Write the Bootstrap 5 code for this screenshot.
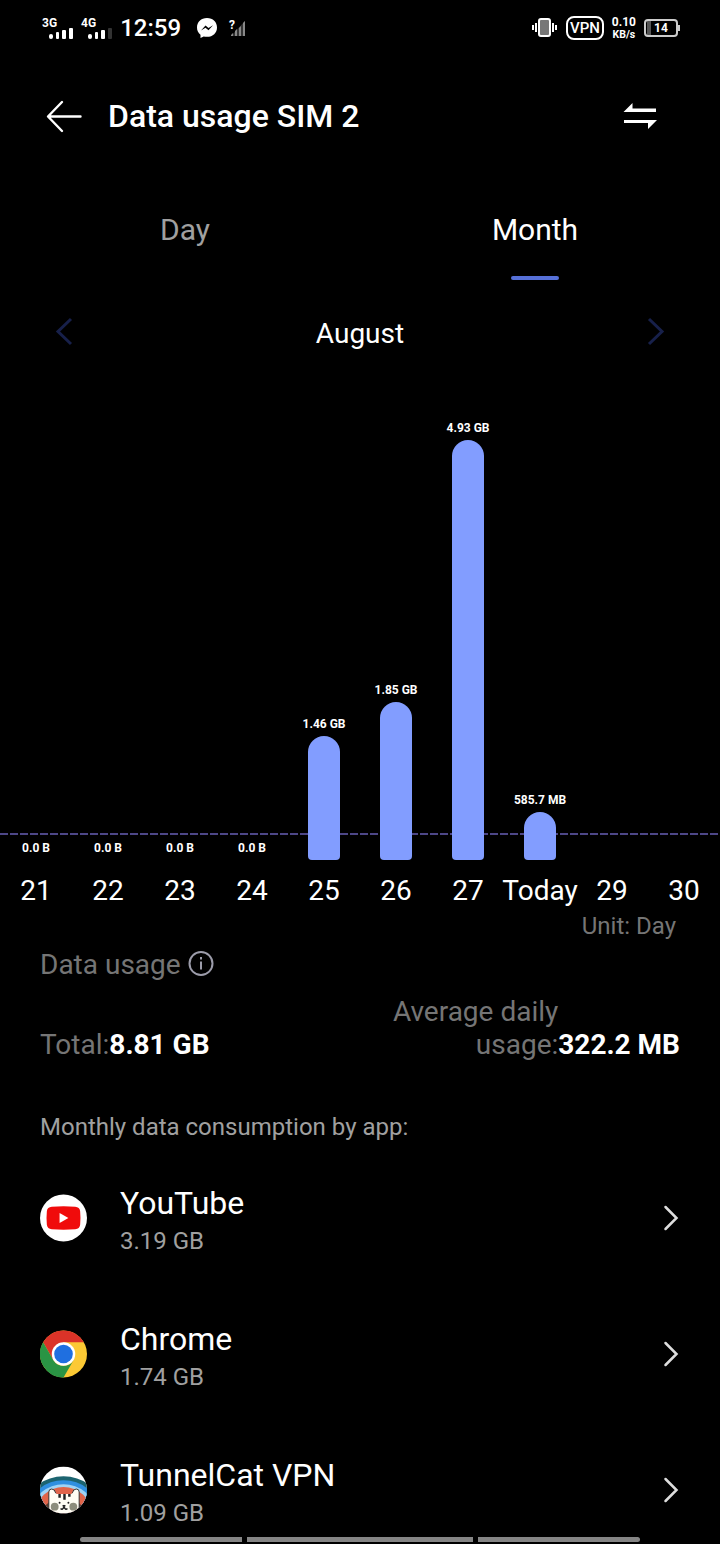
<!DOCTYPE html>
<html lang="en" data-bs-theme="dark">
<head>
    <meta charset="UTF-8">
    <meta name="viewport" content="width=device-width, initial-scale=1.0">
    <title>Data usage SIM 2</title>
    <link href="https://cdn.jsdelivr.net/npm/bootstrap@5.3.3/dist/css/bootstrap.min.css" rel="stylesheet">
    <style>
        body {
            background-color: #000;
            color: #fff;
            font-family: Roboto, "Noto Sans", sans-serif;
            font-size: 28px;
            line-height: 32px;
        }
        svg {
            display: block;
            flex-shrink: 0;
        }
        .gutter { padding-left: 40px; padding-right: 40px; }
        .text-dim { color: #757575; }
        .text-soft { color: #a0a0a0; }
        .fs-note { font-size: 24px; }
        .plain-btn {
            background: none;
            border: 0;
            padding: 0;
            color: inherit;
        }

        /* status bar */
        .status-bar { height: 56px; }
        .status-left { padding-left: 2px; }
        .clock { font-size: 24px; font-weight: 500; }
        .tiny { font-size: 12px; line-height: 12px; font-weight: 700; }
        .signal-bars { margin: 10px 0 0 -8px; }
        .vpn-tag {
            border: 2px solid #fff;
            border-radius: 8px;
            padding: 1px 2px;
            font-size: 15px;
            line-height: 18px;
            font-weight: 500;
        }
        .battery-box {
            width: 34px;
            padding: 1px 0;
            border: 2px solid #ccc;
            border-radius: 4px;
            background: linear-gradient(90deg, #000 1px, #555 1px, #555 5px, #000 5px);
        }
        .battery-box + span {
            width: 2px;
            height: 6px;
            background-color: #ccc;
        }

        /* header and tabs */
        .page-head { height: 120px; }
        .page-head h1 { font-size: 32px; font-weight: 500; line-height: 40px; }
        .tab-row { padding: 0 10px; height: 104px; }
        .tab-btn {
            font-size: 30px;
            color: #a0a0a0;
            padding-top: 38px;
        }
        .tab-btn::after {
            content: "";
            display: block;
            width: 48px;
            height: 4px;
            margin: 30px auto 0;
            border-radius: 2px;
        }
        .tab-btn.active { color: #fff; }
        .tab-btn.active::after { background-color: #5670d8; }
        .month-row { height: 104px; padding: 0 52px; color: #17204a; }

        /* chart */
        .chart { height: 476px; }
        .chart-col { flex: 1 1 0; min-width: 0; white-space: nowrap; }
        .chart-value { font-size: 12px; line-height: 16px; font-weight: 700; margin-bottom: 4px; }
        .chart-bar {
            width: 32px;
            background-color: #829dff;
            border-radius: 16px 16px 4px 4px;
        }
        .avg-line {
            bottom: 25px;
            height: 2px;
            background: repeating-linear-gradient(90deg, #4d4788 0 8px, transparent 8px 10px);
        }
        .axis { height: 50px; padding-top: 15px; }

        /* totals */
        .usage-head { gap: 7px; margin-top: 7px; }
        .totals { margin-top: 14px; line-height: 33px; }

        /* app list */
        .app-list { gap: 54px; margin-top: 35px; }
        .app-link { height: 82px; gap: 33px; color: #fff; }
        .app-text { padding-top: 6px; line-height: 36px; }
        .app-text .name { font-size: 32px; line-height: 40px; }

        .gesture-bar { gap: 5px; padding: 0 80px 2px; }
        .gesture-bar span { height: 5px; background-color: #858585; flex: 162; }
        .gesture-bar span:nth-child(2) { flex: 226; }
        .gesture-bar span:first-child { border-radius: 3px 0 0 3px; }
        .gesture-bar span:last-child { border-radius: 0 3px 3px 0; }
    </style>
</head>
<body>
    <div class="status-bar gutter d-flex align-items-center justify-content-between">
        <div class="status-left d-flex align-items-center">
            <div class="d-flex me-2">
                <span class="tiny">3G</span>
                <svg class="signal-bars" width="24" height="12" viewBox="0 0 24 12" fill="#fff">
                    <rect x="0" y="7" width="4" height="5" rx="2"/><rect x="7" y="5" width="3" height="7" rx="1"/><rect x="13" y="3" width="4" height="9" rx="1"/><rect x="20" y="1" width="4" height="11" rx="1"/>
                </svg>
            </div>
            <div class="d-flex me-2">
                <span class="tiny">4G</span>
                <svg class="signal-bars" width="24" height="12" viewBox="0 0 24 12" fill="#fff">
                    <rect x="0" y="7" width="4" height="5" rx="2"/><rect x="7" y="5" width="3" height="7" rx="1"/><rect x="13" y="3" width="4" height="9" rx="1"/><rect x="20" y="1" width="4" height="11" rx="1" fill="#333"/>
                </svg>
            </div>
            <span class="clock">12:59</span>
            <svg class="ms-3" width="20" height="20" viewBox="0 0 20 20">
                <path d="M10 0C4 0 0 4 0 9.500c0 3 1.200 5.500 3.500 7.200V20l3.200-1.600c1 .3 2.100.4 3.300.4 6 0 10-4 10-9.400S16 0 10 0z" fill="#fff"/>
                <path d="M4 12.500l4.500-5 3 2.500L16 7.200l-4.500 5-3-2.500z" fill="#000"/>
            </svg>
            <div class="d-flex ms-2 ps-1">
                <span class="tiny">?</span>
                <svg width="10" height="18" viewBox="0 0 10 18" fill="#888" overflow="visible">
                    <path d="M-4 17L10 2v15z" fill="#333"/><path d="M-4 17v-1l2-2v3zM0 17v-5l2-2v7zM4 17V9l2-2v10zM8 17V4l2-2v15z"/>
                </svg>
            </div>
        </div>
        <div class="d-flex align-items-center gap-2">
            <svg width="26" height="20" viewBox="0 0 26 20" fill="none" stroke="#fff" stroke-width="2">
                <rect x="7" y="1" width="11" height="17" rx="2" fill="#777"/>
                <path d="M4 5v9M1 7v5M21 5v9M24 7v5"/>
            </svg>
            <span class="vpn-tag">VPN</span>
            <div class="tiny text-center">0.10<br><small>KB/s</small></div>
            <div class="d-flex align-items-center">
                <div class="battery-box tiny text-center">14</div><span></span>
            </div>
        </div>
    </div>

    <header class="page-head gutter d-flex align-items-center">
        <button type="button" class="plain-btn" aria-label="Back">
            <svg width="48" height="40" viewBox="0 0 48 40" fill="none" stroke="#fff" stroke-width="2.400" stroke-linecap="round" stroke-linejoin="round">
                <path d="M22 6L8 20.500 22 35M9 20.500h31.500"/>
            </svg>
        </button>
        <h1 class="mb-0 ms-3 ps-1">Data usage SIM 2</h1>
        <button type="button" class="plain-btn ms-auto me-3" aria-label="Switch SIM">
            <svg width="48" height="40" viewBox="0 0 48 40" fill="#fff">
                <path d="M7.500 16L16.500 7v5.500H40V16zM8 24h33l-9 9v-6H8z"/>
            </svg>
        </button>
    </header>

    <div class="tab-row d-flex" role="tablist">
        <button type="button" class="plain-btn tab-btn flex-fill w-50" role="tab" aria-selected="false">Day</button>
        <button type="button" class="plain-btn tab-btn flex-fill w-50 active" role="tab" aria-selected="true">Month</button>
    </div>

    <div class="month-row d-flex align-items-center justify-content-between">
        <button type="button" class="plain-btn" aria-label="Previous month">
            <svg width="24" height="32" viewBox="0 0 24 32" fill="none" stroke="currentColor" stroke-width="3"><path d="M19 3L6 15.500 19 28"/></svg>
        </button>
        <span class="text-white pt-1">August</span>
        <button type="button" class="plain-btn" aria-label="Next month">
            <svg width="24" height="32" viewBox="0 0 24 32" fill="none" stroke="currentColor" stroke-width="3"><path d="M5 3l13 12.500L5 28"/></svg>
        </button>
    </div>

    <div class="chart position-relative d-flex align-items-stretch">
        <div class="avg-line position-absolute start-0 end-0"></div>
        <div class="chart-col position-relative d-flex flex-column align-items-center justify-content-end"><span class="chart-value">0.0 B</span></div>
        <div class="chart-col position-relative d-flex flex-column align-items-center justify-content-end"><span class="chart-value">0.0 B</span></div>
        <div class="chart-col position-relative d-flex flex-column align-items-center justify-content-end"><span class="chart-value">0.0 B</span></div>
        <div class="chart-col position-relative d-flex flex-column align-items-center justify-content-end"><span class="chart-value">0.0 B</span></div>
        <div class="chart-col position-relative d-flex flex-column align-items-center justify-content-end"><span class="chart-value">1.46 GB</span><div class="chart-bar" style="height: 124px"></div></div>
        <div class="chart-col position-relative d-flex flex-column align-items-center justify-content-end"><span class="chart-value">1.85 GB</span><div class="chart-bar" style="height: 158px"></div></div>
        <div class="chart-col position-relative d-flex flex-column align-items-center justify-content-end"><span class="chart-value">4.93 GB</span><div class="chart-bar" style="height: 420px"></div></div>
        <div class="chart-col position-relative d-flex flex-column align-items-center justify-content-end"><span class="chart-value">585.7 MB</span><div class="chart-bar" style="height: 48px"></div></div>
        <div class="chart-col"></div>
        <div class="chart-col"></div>
    </div>
    <div class="axis d-flex">
        <span class="chart-col d-flex justify-content-center">21</span>
        <span class="chart-col d-flex justify-content-center">22</span>
        <span class="chart-col d-flex justify-content-center">23</span>
        <span class="chart-col d-flex justify-content-center">24</span>
        <span class="chart-col d-flex justify-content-center">25</span>
        <span class="chart-col d-flex justify-content-center">26</span>
        <span class="chart-col d-flex justify-content-center">27</span>
        <span class="chart-col d-flex justify-content-center">Today</span>
        <span class="chart-col d-flex justify-content-center">29</span>
        <span class="chart-col d-flex justify-content-center">30</span>
    </div>

    <main class="gutter">
        <div class="fs-note text-dim text-end pe-1">Unit: Day</div>
        <div class="usage-head d-flex align-items-center text-dim">
            Data usage
            <button type="button" class="plain-btn" aria-label="About data usage">
                <svg width="28" height="28" viewBox="0 0 28 28" fill="none" stroke="#9c9caa" stroke-width="2">
                    <circle cx="13" cy="12.500" r="11.500"/><path d="M13 10.500v8M13 6v2.500"/>
                </svg>
            </button>
        </div>
        <div class="totals d-flex align-items-end justify-content-between text-dim">
            <div>Total:<strong class="text-white">8.81 GB</strong></div>
            <div class="d-flex align-items-end">
                <div class="text-end">Average daily<br>usage:</div>
                <strong class="text-white">322.2 MB</strong>
            </div>
        </div>

        <h2 class="fs-note text-soft fw-normal mb-0 mt-5 pt-1">Monthly data consumption by app:</h2>

        <div class="app-list d-flex flex-column">
            <a href="#youtube" class="app-link d-flex align-items-center text-decoration-none">
                <svg width="47" height="48" viewBox="0 0 48 48">
                    <circle cx="24" cy="24" r="24" fill="#fff"/>
                    <path d="M12 12.500q12-1 24 0 4.500.3 5 4.500.7 7 0 14-.5 4.200-5 4.500-12 1-24 0-4.500-.3-5-4.500-.7-7 0-14 .5-4.200 5-4.500z" fill="#f00b0b"/>
                    <path d="M20 19l9 5-9 5z" fill="#fff"/>
                </svg>
                <span class="app-text flex-fill">
                    <span class="name d-block">YouTube</span>
                    <span class="fs-note text-soft d-block">3.19 GB</span>
                </span>
                <svg width="20" height="32" viewBox="0 0 20 32" fill="none" stroke="#ddd" stroke-width="2.500" stroke-linecap="round"><path d="M5.500 5l11 11-11 11"/></svg>
            </a>
            <a href="#chrome" class="app-link d-flex align-items-center text-decoration-none">
                <svg width="47" height="48" viewBox="0 0 48 48">
                    <circle cx="24" cy="24" r="24" fill="#fcc934"/>
                    <path d="M24 12h20.800A24 24 0 0 0 3.200 12l10.400 18z" fill="#db3328"/>
                    <path d="M34.400 30L24 48A24 24 0 0 1 3.200 12l10.400 18A12 12 0 0 0 34.400 30z" fill="#2a9444"/>
                    <circle cx="24" cy="24" r="12" fill="#fff"/>
                    <circle cx="24" cy="24" r="9.500" fill="#1f6fe0"/>
                </svg>
                <span class="app-text flex-fill">
                    <span class="name d-block">Chrome</span>
                    <span class="fs-note text-soft d-block">1.74 GB</span>
                </span>
                <svg width="20" height="32" viewBox="0 0 20 32" fill="none" stroke="#ddd" stroke-width="2.500" stroke-linecap="round"><path d="M5.500 5l11 11-11 11"/></svg>
            </a>
            <a href="#tunnelcat" class="app-link d-flex align-items-center text-decoration-none">
                <svg width="47" height="48" viewBox="0 0 48 48">
                    <clipPath id="catClip"><circle cx="24" cy="24" r="24"/></clipPath>
                    <g clip-path="url(#catClip)">
                        <rect width="48" height="48" fill="#fff"/>
                        <ellipse cx="24" cy="38" rx="36" ry="28" fill="#1c6470"/>
                        <ellipse cx="24" cy="42" rx="34" ry="28" fill="#2f8fe0"/>
                        <ellipse cx="24" cy="45" rx="31" ry="27" fill="#9fd3f5"/>
                        <ellipse cx="24" cy="47" rx="28" ry="26" fill="#e0644a"/>
                        <ellipse cx="24" cy="56" rx="25" ry="24" fill="#5a3a2c"/>
                        <path d="M9 48V26q0-3 3-3t4 4h17q1-4 4-4t3 3v22z" fill="#fffdf4" stroke="#333" stroke-width="1"/>
                        <path d="M16 26q8-3 17 0l-1 2H17z" fill="#e0644a"/>
                        <path d="M20 28v4M25 28v6M30 28v3" stroke="#222" stroke-width="2.500"/>
                        <circle cx="15" cy="41" r="4" fill="#8d8d7c"/><circle cx="34" cy="41" r="4" fill="#8d8d7c"/>
                        <circle cx="20" cy="37" r="1" fill="#222"/><circle cx="29" cy="37" r="1" fill="#222"/>
                        <path d="M21 43q2 2 3.500-2 1.500 4 3.500 2M23 40h3" fill="none" stroke="#222" stroke-width="1.500"/>
                    </g>
                </svg>
                <span class="app-text flex-fill">
                    <span class="name d-block">TunnelCat VPN</span>
                    <span class="fs-note text-soft d-block">1.09 GB</span>
                </span>
                <svg width="20" height="32" viewBox="0 0 20 32" fill="none" stroke="#ddd" stroke-width="2.500" stroke-linecap="round"><path d="M5.500 5l11 11-11 11"/></svg>
            </a>
        </div>
    </main>

    <div class="gesture-bar fixed-bottom d-flex">
        <span></span><span></span><span></span>
    </div>

    <script src="https://cdn.jsdelivr.net/npm/bootstrap@5.3.3/dist/js/bootstrap.bundle.min.js"></script>
</body>
</html>
